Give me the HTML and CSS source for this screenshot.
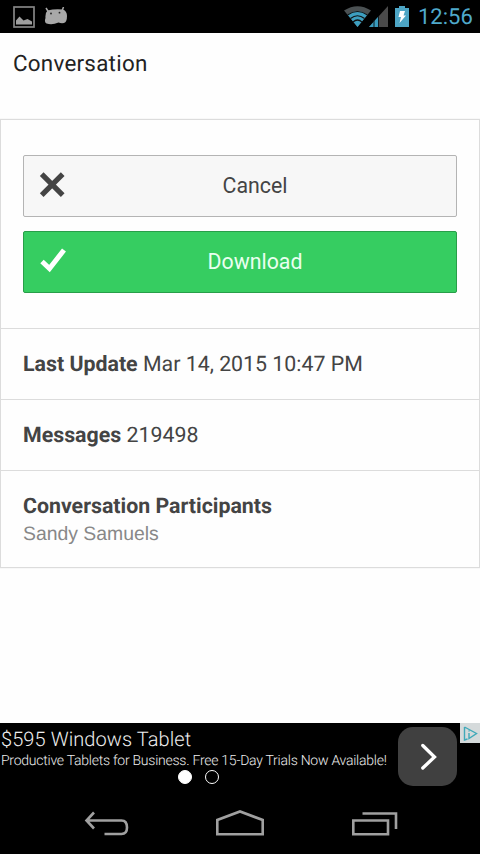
FILE: index.html
```html
<!DOCTYPE html>
<html lang="en">
<head>
    <meta charset="UTF-8">
    <meta name="viewport" content="width=device-width, initial-scale=1.0">
    <title>Conversation</title>
    <link rel="stylesheet" href="styles.css">
</head>
<body>
    <div class="status-bar">
        <svg class="icon-picture" width="22" height="22" viewBox="0 0 22 22">
            <rect x="1" y="1" width="20" height="20" fill="none" stroke="#858585" stroke-width="1.7"/>
            <path d="M3 18.500V14.500L6.500 10.500l4 4 4-1.500 4.500 2.500v3z" fill="#a0a0a0"/>
        </svg>
        <svg class="icon-debug" width="24" height="18" viewBox="0 0 24 18">
            <path d="M2 1l2.500 4M19.500 0l-1.500 4" stroke="#a8a8a8" stroke-width="1.500"/>
            <path d="M3.500 3.500Q11 1.500 19 2.500Q23 4 23 9Q23 15 20 16Q17 16.500 14.500 15.500Q8 18.500 2.500 16.500Q0 15 1.500 11Q1 6 3.500 3.500z" fill="#a8a8a8"/>
            <circle cx="7" cy="6.500" r="0.900" fill="#222"/>
            <circle cx="15.500" cy="5.700" r="0.900" fill="#222"/>
        </svg>
        <div class="status-right">
            <svg width="27" height="21" viewBox="0 0 27 21">
                <path d="M0 4.500Q13.500-4 27 4.500L13.500 21z" fill="#4b5153"/>
                <path d="M3.500 8.500Q13.500 1.500 23.500 8.500L13.500 21z" fill="#3d9fc0"/>
                <path d="M3.500 9Q13.500 2 23.500 9M6.500 12.500Q13.500 7 20.500 12.500M9 16Q13.500 12 18 16" fill="none" stroke="#111" stroke-width="1.200"/>
            </svg>
            <svg class="icon-signal" width="19" height="21" viewBox="0 0 19 21">
                <path d="M0 21L19 0v21z" fill="#4a4a4a"/>
                <path d="M0 21L9 11v10z" fill="#3a9bbd"/>
                <path d="M5 14v7M9.500 10v11" stroke="#0c1a20" stroke-width="1"/>
            </svg>
            <svg class="icon-battery" width="14" height="21" viewBox="0 0 14 21">
                <path d="M0 2h4V0h6v2h4v19H0z" fill="#4da5c5"/>
                <path d="M5 5h5L8.500 9.500H11L4.500 17l1.500-6H3.500z" fill="#fff"/>
            </svg>
            <span class="clock">12:56</span>
        </div>
    </div>

    <header class="header">
        <h1 class="title">Conversation</h1>
    </header>

    <main class="content">
        <div class="card">
            <div class="actions">
                <button class="btn btn-cancel">
                    <svg class="btn-icon" width="30" height="30" viewBox="0 0 30 30">
                        <path d="M4.700 4.200l21 21M25.700 4.200l-21 21" stroke="#444" stroke-width="5.200"/>
                    </svg>
                    <span>Cancel</span>
                </button>
                <button class="btn btn-download">
                    <svg class="btn-icon" width="30" height="30" viewBox="0 0 30 30">
                        <path d="M5 15.500l7.500 7L27 4" fill="none" stroke="#fff" stroke-width="5"/>
                    </svg>
                    <span>Download</span>
                </button>
            </div>
            <div class="row row-update"><strong>Last Update</strong> Mar 14, 2015 10:47 PM</div>
            <div class="row row-messages"><strong>Messages</strong> 219498</div>
            <div class="row row-people">
                <strong>Conversation Participants</strong>
                <p class="names">Sandy Samuels</p>
            </div>
        </div>
    </main>

    <div class="ad">
        <div class="ad-text">
            <div class="ad-title">$595 Windows Tablet</div>
            <div class="ad-desc">Productive Tablets for Business. Free 15-Day Trials Now Available!</div>
            <div class="ad-dots">
                <span class="dot dot-active"></span>
                <span class="dot"></span>
            </div>
        </div>
        <div class="ad-arrow">
            <svg width="59" height="59" viewBox="0 0 59 59">
                <path d="M24.800 18.500L36.500 30 24.800 41" fill="none" stroke="#fff" stroke-width="3.300" stroke-linecap="round"/>
            </svg>
        </div>
        <div class="ad-choices">
            <svg width="20" height="20" viewBox="0 0 20 20">
                <path d="M4.500 4v13l3-1M4.500 4L16.500 10.500 9 15.500V10M9 7.500v1" fill="none" stroke="#3fa9b9" stroke-width="1.400"/>
            </svg>
        </div>
    </div>

    <nav class="nav-bar">
        <svg width="480" height="68" viewBox="0 0 480 68" fill="none" stroke="#a0a0a0" stroke-width="2.600">
            <path d="M94 26.500L86.500 34.500 94 42.500M86.500 34.500H121.500Q127 34.500 127 41.500 127 48 121.500 48H104.500"/>
            <path d="M217.300 48.200V34L240 25.500 262.700 34V48.200z"/>
            <path d="M353.300 34.500H388V48.200H353.300zM362.500 27.500H396V43"/>
        </svg>
    </nav>
</body>
</html>
```

FILE: styles.css
```css
* {
    box-sizing: border-box;
}

body {
    margin: 0;
    height: 854px;
    display: flex;
    flex-direction: column;
    overflow: hidden;
    background: #fefefe;
    color: #444;
    font-family: Roboto, "Liberation Sans", sans-serif;
    font-size: 21.33px;
    text-rendering: geometricPrecision;
}

.status-bar {
    height: 33px;
    flex: none;
    display: flex;
    align-items: center;
    padding: 0 8px 0 13px;
    background: #000;
}

.icon-debug {
    margin: 0 0 1px 9px;
}

.status-right {
    margin-left: auto;
    display: flex;
    align-items: center;
}

.icon-signal {
    margin-left: -2px;
}

.icon-battery {
    margin: 0 9px 0 7px;
}

.clock {
    width: 54px;
    padding-top: 2px;
    color: #4fa9cb;
    font-size: 22px;
    line-height: 31px;
    white-space: nowrap;
}

.header {
    height: 86px;
    flex: none;
    padding: 16px 13px 0;
}

.title {
    margin: 0;
    color: #222;
    font-size: 22.4px;
    font-weight: 400;
    line-height: 30px;
    letter-spacing: 0.25px;
}

.content {
    flex: 1;
}

.card {
    border: 1px solid #dcdcdc;
    box-shadow: 0 0 1px #ddd;
}

.actions {
    height: 208px;
    padding: 35px 22px 0;
    display: flex;
    flex-direction: column;
    gap: 14px;
}

.btn {
    height: 62px;
    display: flex;
    align-items: center;
    padding: 0 13px 2px;
    border: 1px solid #b4b4b4;
    border-radius: 2px;
    font: inherit;
}

.btn span {
    flex: 1;
    text-align: center;
}

.btn-cancel {
    background: #f7f7f7;
    color: #444;
}

.btn-download {
    background: #36cd61;
    border-color: #289e49;
    color: #e9ffef;
}

.row {
    height: 71px;
    padding: 22px 22px 0;
    border-top: 1px solid #dcdcdc;
    line-height: 28px;
    white-space: nowrap;
}

.row strong {
    font-weight: 700;
}

.row-people {
    height: 97px;
}

.names {
    margin: 0;
    color: #888;
    font-family: "Liberation Sans", sans-serif;
    font-size: 19.4px;
    line-height: 26px;
}

.ad {
    height: 63px;
    flex: none;
    display: flex;
    background: #000;
    color: #eee;
    font-weight: 300;
}

.ad-text {
    width: 398px;
    padding: 4px 0 0 1px;
    white-space: nowrap;
}

.ad-title {
    font-size: 20px;
    line-height: 25px;
    letter-spacing: 0.08px;
}

.ad-desc {
    padding-top: 1px;
    font-size: 14px;
    line-height: 17px;
    letter-spacing: -0.25px;
}

.ad-dots {
    display: flex;
    gap: 13px;
    padding-left: 177px;
}

.dot {
    width: 14px;
    height: 14px;
    border: 1.5px solid #fff;
    border-radius: 50%;
}

.dot-active {
    background: #fff;
}

.ad-arrow {
    width: 59px;
    height: 59px;
    margin: 4px 3px 0 0;
    border-radius: 15px;
    background: #404040;
}

.ad-choices {
    width: 20px;
    height: 20px;
    background: #d5dadb;
}

.nav-bar {
    height: 68px;
    flex: none;
    background: #000;
}
```
